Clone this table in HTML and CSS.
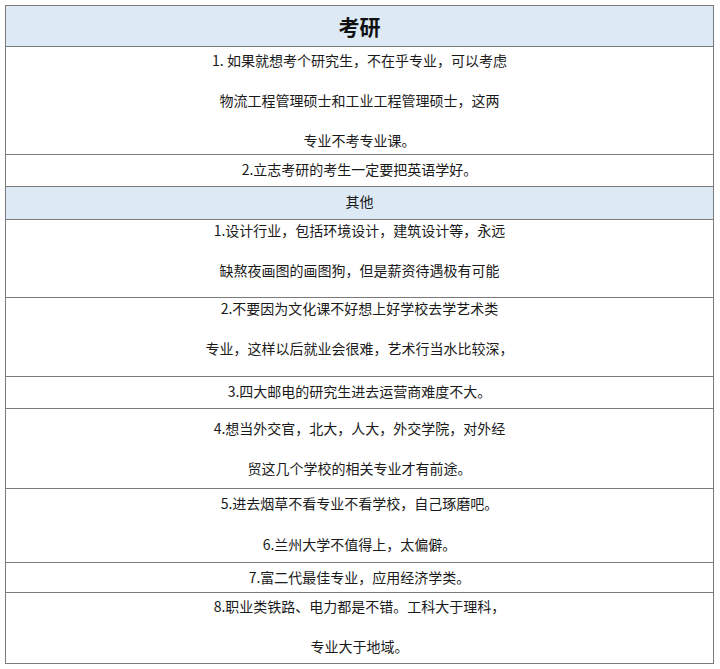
FILE: index.html
```html
<!DOCTYPE html>
<html lang="zh-CN">
<head>
<meta charset="utf-8">
<title>考研</title>
<link rel="stylesheet" href="styles.css">
</head>
<body>
<table class="sheet">
  <tr><th class="title">考研</th></tr>
  <tr><td class="r-a">
    <p>1. 如果就想考个研究生，不在乎专业，可以考虑</p>
    <p>物流工程管理硕士和工业工程管理硕士，这两</p>
    <p>专业不考专业课。</p>
  </td></tr>
  <tr><td class="r-one"><p>2.立志考研的考生一定要把英语学好。</p></td></tr>
  <tr><th class="sub"><p>其他</p></th></tr>
  <tr><td class="r-top">
    <p>1.设计行业，包括环境设计，建筑设计等，永远</p>
    <p>缺熬夜画图的画图狗，但是薪资待遇极有可能</p>
  </td></tr>
  <tr><td class="r-top r-top2">
    <p>2.不要因为文化课不好想上好学校去学艺术类</p>
    <p>专业，这样以后就业会很难，艺术行当水比较深，</p>
  </td></tr>
  <tr><td class="r-one"><p>3.四大邮电的研究生进去运营商难度不大。</p></td></tr>
  <tr><td class="r-mid">
    <p>4.想当外交官，北大，人大，外交学院，对外经</p>
    <p>贸这几个学校的相关专业才有前途。</p>
  </td></tr>
  <tr><td class="r-b">
    <p>5.进去烟草不看专业不看学校，自己琢磨吧。</p>
    <p class="wide">6.兰州大学不值得上，太偏僻。</p>
  </td></tr>
  <tr><td class="r-short"><p>7.富二代最佳专业，应用经济学类。</p></td></tr>
  <tr><td class="r-c">
    <p>8.职业类铁路、电力都是不错。工科大于理科，</p>
    <p>专业大于地域。</p>
  </td></tr>
</table>
</body>
</html>
```

FILE: styles.css
```css
html, body {
  margin: 0;
  padding: 0;
  background: #ffffff;
}
body {
  padding: 5px 0 0 5px;
  font-family: "Noto Sans CJK SC", "Noto Sans", sans-serif;
  font-size: 14px;
  color: #1a1a1a;
}
.sheet {
  width: 709px;
  border-collapse: collapse;
  border: 1px solid #7a7a7a;
}
.sheet th,
.sheet td {
  border: 1px solid #7a7a7a;
  text-align: center;
  vertical-align: top;
  padding: 0;
}
.sheet p {
  margin: 0;
  line-height: 21px;
}
.sheet p + p {
  margin-top: 19px;
}
.sheet p + p.wide {
  margin-top: 20px;
}
.title {
  background: #dde9f5;
  font-size: 21px;
  font-weight: 700;
  height: 40px;
  line-height: 40px;
  color: #111;
}
.sheet .sub {
  background: #dde9f5;
  font-weight: 400;
  padding: 4px 0 7px;
}
.sheet .r-a { padding: 3px 0 3px; }
.sheet .r-one { padding: 4px 0 6px; }
.sheet .r-short { padding: 4px 0 4px; }
.sheet .r-top { padding: 0 0 16px; }
.sheet .r-top2 { padding-bottom: 17px; }
.sheet .r-mid { padding: 9px 0 9px; }
.sheet .r-b { padding: 4px 0 7px; }
.sheet .r-c { padding: 3px 0 6px; }
```
